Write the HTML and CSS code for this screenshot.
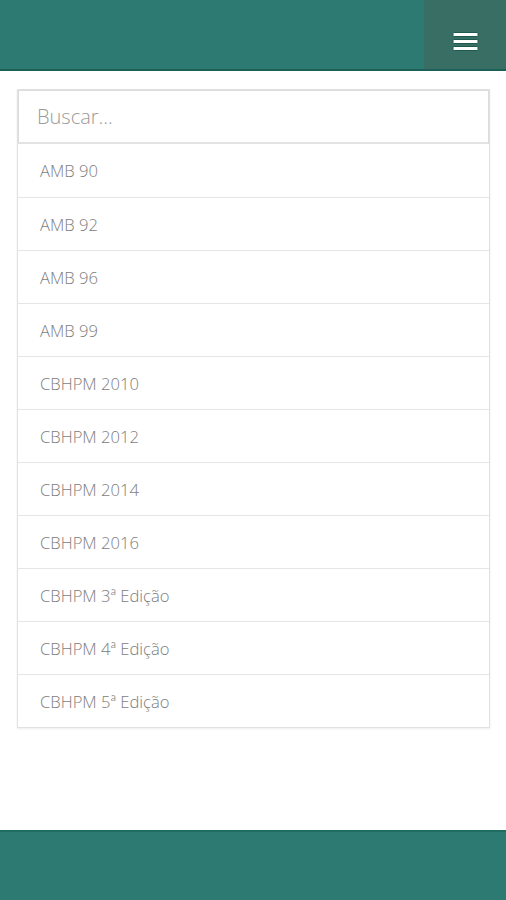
FILE: index.html
```html
<!DOCTYPE html>
<html lang="pt">
<head>
<meta charset="utf-8">
<title>Tabelas</title>
<link rel="stylesheet" href="styles.css">
</head>
<body>
<div class="app">
  <header class="topbar">
    <div class="brand"></div>
    <button class="menu-btn" aria-label="Menu">
      <svg width="27" height="22" viewBox="0 0 27 22">
        <rect x="1" y="1.5" width="25" height="4" rx="1" fill="#fff" stroke="#1f5a51" stroke-width="1"/>
        <rect x="1" y="8.5" width="25" height="4" rx="1" fill="#fff" stroke="#1f5a51" stroke-width="1"/>
        <rect x="1" y="15.5" width="25" height="4" rx="1" fill="#fff" stroke="#1f5a51" stroke-width="1"/>
      </svg>
    </button>
  </header>
  <main class="content">
    <div class="list">
      <input class="search" type="text" placeholder="Buscar...">
      <div class="item">AMB 90</div>
      <div class="item">AMB 92</div>
      <div class="item">AMB 96</div>
      <div class="item">AMB 99</div>
      <div class="item">CBHPM 2010</div>
      <div class="item">CBHPM 2012</div>
      <div class="item">CBHPM 2014</div>
      <div class="item">CBHPM 2016</div>
      <div class="item">CBHPM 3ª Edição</div>
      <div class="item">CBHPM 4ª Edição</div>
      <div class="item">CBHPM 5ª Edição</div>
    </div>
  </main>
  <footer class="footer"></footer>
</div>
</body>
</html>
```
FILE: styles.css
```css
* { box-sizing: border-box; }
html, body { margin: 0; padding: 0; background: #fff; }
body { font-family: "Open Sans", "Liberation Sans", sans-serif; }
.app { display: flex; flex-direction: column; height: 900px; }
.topbar {
  height: 71px;
  background: #2c7a71;
  border-bottom: 2px solid #1c5f56;
  display: flex;
  justify-content: space-between;
  flex-shrink: 0;
}
.menu-btn {
  width: 82px;
  height: 69px;
  border: 0;
  padding: 31px 0 0 1px;
  background: #396e65;
  display: flex;
  align-items: flex-start;
  justify-content: center;
  cursor: pointer;
}
.menu-btn svg { display: block; }
.content { flex: 1; padding: 18px 16px 0 17px; }
.list {
  border: 1px solid #e2e2e2;
  box-shadow: 0 1px 2px rgba(0,0,0,0.08);
  background: #fff;
}
.search {
  display: block;
  width: 100%;
  height: 54px;
  border: 1px solid #dcdcdc;
  border-bottom: 2px solid #e3e3e3;
  margin: 0;
  padding: 0 18px;
  font-family: "Open Sans", "Liberation Sans", sans-serif;
  font-size: 20px;
  font-weight: 300;
  color: #555;
  outline: none;
}
.search::placeholder { color: #9a9a9a; }
.item {
  height: 53px;
  display: flex;
  align-items: center;
  padding: 0 22px;
  font-size: 16.6px;
  font-weight: 300;
  color: #7d7d7d;
  border-top: 1px solid #e6e6e6;
}
.search + .item { border-top: 0; }
.footer {
  height: 70px;
  background: #2c7a71;
  border-top: 2px solid #1f6c62;
  flex-shrink: 0;
}
```
